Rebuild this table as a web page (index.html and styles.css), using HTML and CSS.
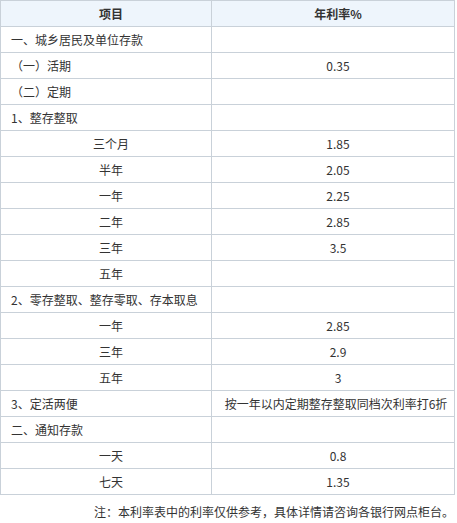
FILE: index.html
```html
<!DOCTYPE html>
<html lang="zh-CN">
<head>
<meta charset="utf-8">
<link rel="stylesheet" href="styles.css">
</head>
<body>
<table class="rates">
  <colgroup><col class="c1"><col class="c2"></colgroup>
  <thead>
    <tr><th>项目</th><th>年利率%</th></tr>
  </thead>
  <tbody>
    <tr><td class="l">一、城乡居民及单位存款</td><td></td></tr>
    <tr><td class="l">（一）活期</td><td>0.35</td></tr>
    <tr><td class="l">（二）定期</td><td></td></tr>
    <tr><td class="l">1、整存整取</td><td></td></tr>
    <tr><td>三个月</td><td>1.85</td></tr>
    <tr><td>半年</td><td>2.05</td></tr>
    <tr><td>一年</td><td>2.25</td></tr>
    <tr><td>二年</td><td>2.85</td></tr>
    <tr><td>三年</td><td>3.5</td></tr>
    <tr><td>五年</td><td></td></tr>
    <tr><td class="l">2、零存整取、整存零取、存本取息</td><td></td></tr>
    <tr><td>一年</td><td>2.85</td></tr>
    <tr><td>三年</td><td>2.9</td></tr>
    <tr><td>五年</td><td>3</td></tr>
    <tr><td class="l">3、定活两便</td><td class="nw">按一年以内定期整存整取同档次利率打6折</td></tr>
    <tr><td class="l">二、通知存款</td><td></td></tr>
    <tr><td>一天</td><td>0.8</td></tr>
    <tr><td>七天</td><td>1.35</td></tr>
  </tbody>
</table>
<p class="note">注：本利率表中的利率仅供参考，具体详情请咨询各银行网点柜台。</p>
</body>
</html>
```
FILE: styles.css
```css
html, body {
  margin: 0;
  padding: 0;
  background: #ffffff;
}
body {
  font-family: "Noto Sans CJK SC", "Noto Sans", sans-serif;
  font-size: 12px;
  color: #333333;
}
.rates {
  border-collapse: collapse;
  width: 454px;
  table-layout: fixed;
}
.c1 { width: 211px; }
.c2 { width: 243px; }
.rates th,
.rates td {
  border: 1px solid #c9d1d9;
  height: 26px;
  padding: 0 0 0 10px;
  line-height: 16px;
  text-align: center;
  vertical-align: middle;
  box-sizing: border-box;
}
.rates th {
  background: #eef5fc;
  font-weight: bold;
  color: #333333;
}
.rates td.l {
  text-align: left;
}
.rates td.nw {
  white-space: nowrap;
  padding-left: 6px;
}
.note {
  margin: 8px 0 0 0;
  width: 454px;
  text-align: right;
  line-height: 18px;
}
```
